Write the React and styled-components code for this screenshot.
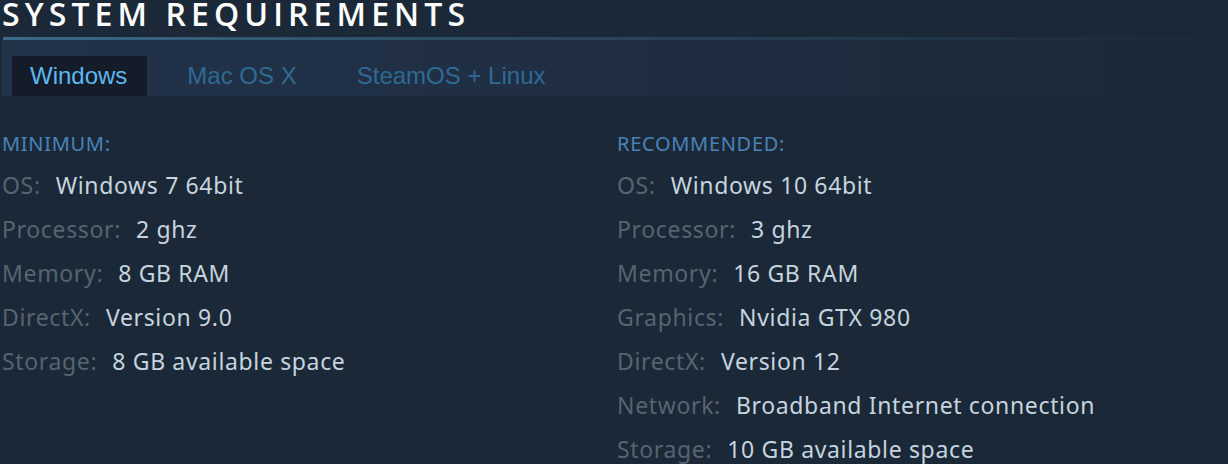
import React, { useState } from 'react';
import styled, { createGlobalStyle } from 'styled-components';

const GlobalStyle = createGlobalStyle`
  html, body {
    margin: 0;
    padding: 0;
    background: #1b2838;
  }
`;

const Page = styled.div`
  width: 1228px;
  height: 464px;
  overflow: hidden;
  background: #1b2838;
  padding-left: 2px;
  box-sizing: border-box;
`;

const Title = styled.h2`
  margin: 0;
  height: 37px;
  font-family: 'Open Sans', sans-serif;
  font-weight: 600;
  font-size: 32px;
  line-height: 27px;
  letter-spacing: 5.1px;
  color: #ffffff;
  white-space: nowrap;
`;

const Divider = styled.div`
  height: 3px;
  margin-left: 1px;
  background: linear-gradient(to right, #3a6a87 0%, #2c4a62 40%, rgba(42, 71, 94, 0) 100%);
`;

const TabBar = styled.div`
  display: flex;
  height: 56px;
  padding: 16px 0 0 10px;
  box-sizing: border-box;
  background: linear-gradient(to right, #223249 0%, #1f2e42 50%, #1b2838 100%);
`;

const Tab = styled.button`
  border: none;
  margin: 0 22px 0 0;
  height: 40px;
  padding: 0 20px 0 18px;
  font-family: 'Liberation Sans', Arial, sans-serif;
  font-size: 24px;
  cursor: pointer;
  background: ${(props) => (props.$active ? '#131c28' : 'transparent')};
  color: ${(props) => (props.$active ? '#5fb8ef' : '#2f6a94')};
`;

const Columns = styled.div`
  display: grid;
  grid-template-columns: 615px 1fr;
  padding-top: 36px;
`;

const Column = styled.div`
  display: flex;
  flex-direction: column;
`;

const Heading = styled.div`
  font-family: 'Noto Sans', sans-serif;
  font-size: 20px;
  line-height: 24px;
  letter-spacing: 0.7px;
  color: #4884b8;
  text-transform: uppercase;
  margin-bottom: 7px;
`;

const Row = styled.div`
  font-family: 'Noto Sans', sans-serif;
  font-size: 23px;
  line-height: 44px;
  letter-spacing: 0.65px;
  white-space: nowrap;
`;

const Label = styled.span`
  color: #56646f;
  margin-right: 15px;
`;

const Value = styled.span`
  color: #c6d4df;
`;

const minimum = [
  ['OS', 'Windows 7 64bit'],
  ['Processor', '2 ghz'],
  ['Memory', '8 GB RAM'],
  ['DirectX', 'Version 9.0'],
  ['Storage', '8 GB available space'],
];

const recommended = [
  ['OS', 'Windows 10 64bit'],
  ['Processor', '3 ghz'],
  ['Memory', '16 GB RAM'],
  ['Graphics', 'Nvidia GTX 980'],
  ['DirectX', 'Version 12'],
  ['Network', 'Broadband Internet connection'],
  ['Storage', '10 GB available space'],
];

const Spec = ({ title, items }) => (
  <Column>
    <Heading>{title}</Heading>
    {items.map(([label, value]) => (
      <Row key={label}>
        <Label>{label}:</Label>
        <Value>{value}</Value>
      </Row>
    ))}
  </Column>
);

const tabs = ['Windows', 'Mac OS X', 'SteamOS + Linux'];

export default function App() {
  const [active, setActive] = useState('Windows');
  return (
    <Page>
      <GlobalStyle />
      <Title>SYSTEM REQUIREMENTS</Title>
      <Divider />
      <TabBar>
        {tabs.map((t) => (
          <Tab key={t} $active={t === active} onClick={() => setActive(t)}>
            {t}
          </Tab>
        ))}
      </TabBar>
      <Columns>
        <Spec title="Minimum:" items={minimum} />
        <Spec title="Recommended:" items={recommended} />
      </Columns>
    </Page>
  );
}
